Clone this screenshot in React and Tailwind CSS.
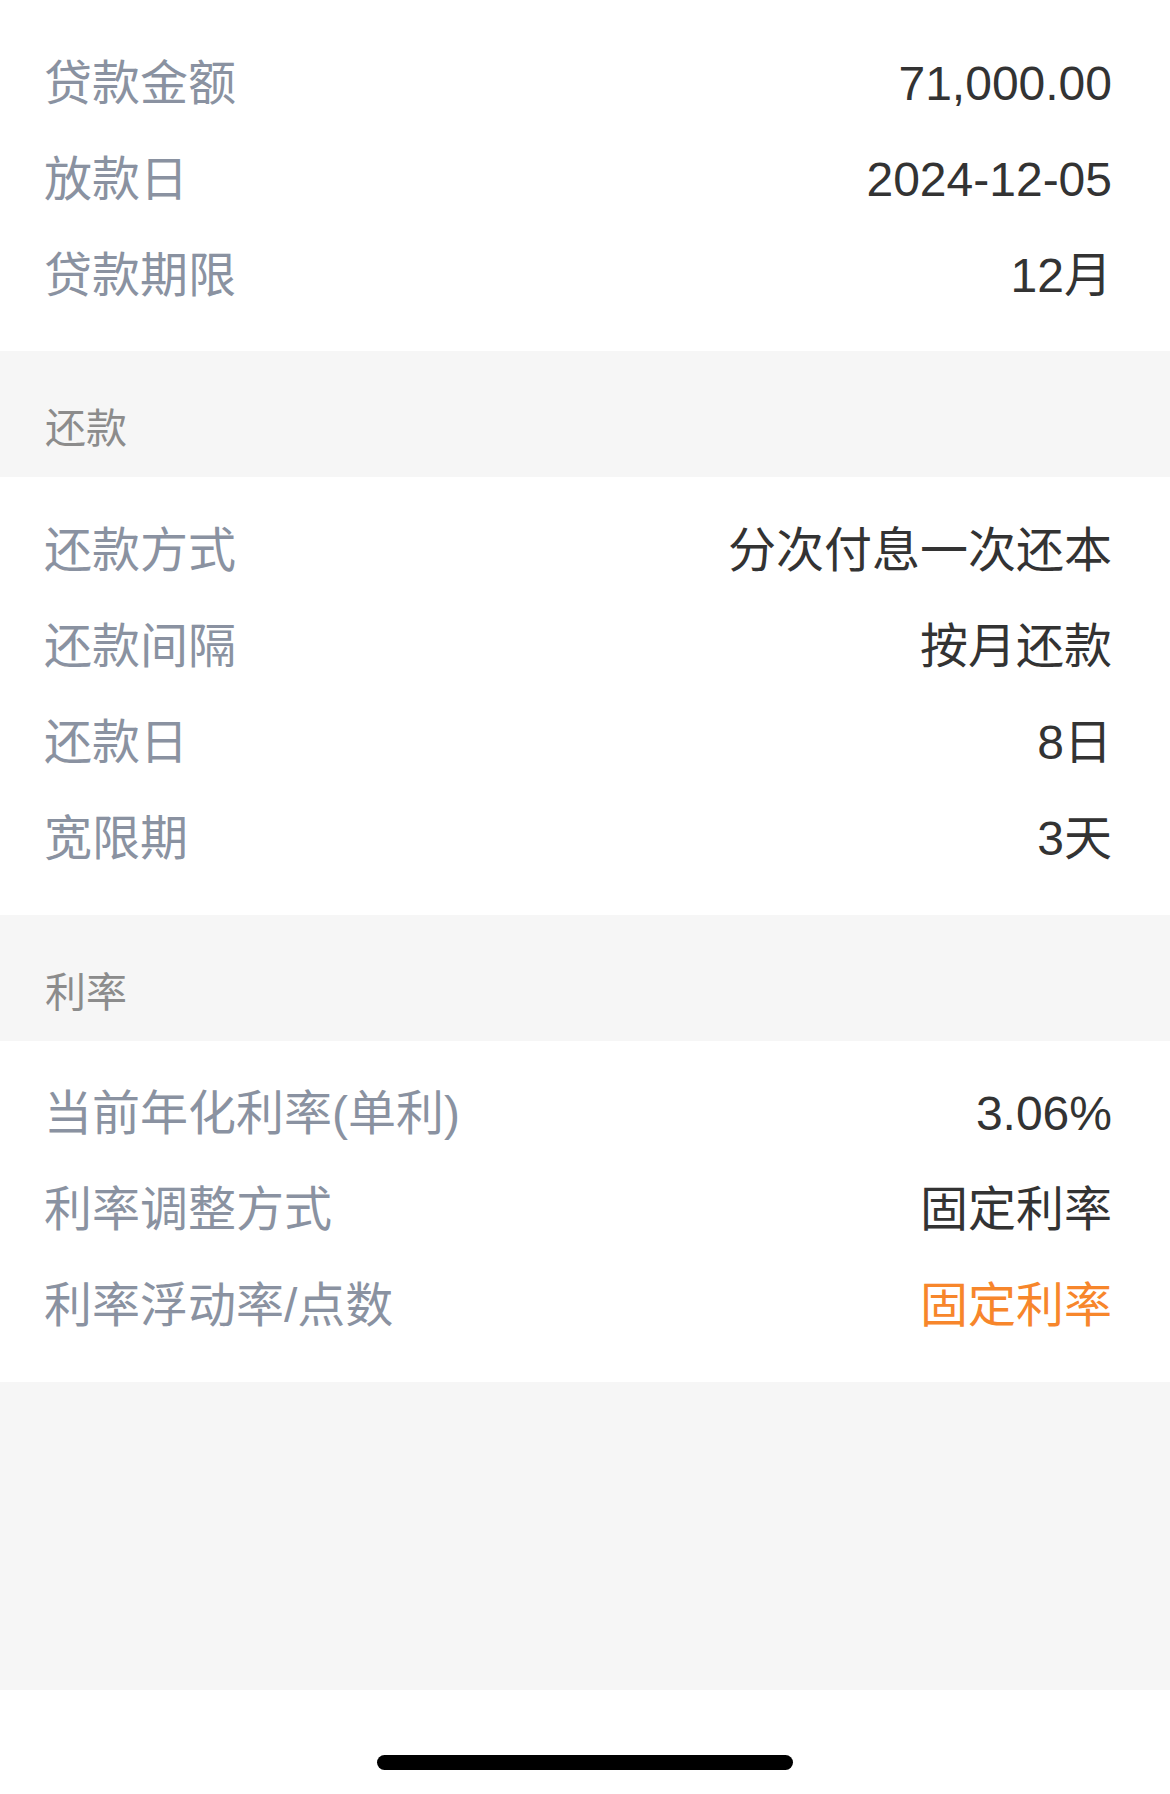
import React from 'react';

const loanRows = [
  { label: '贷款金额', value: '71,000.00' },
  { label: '放款日', value: '2024-12-05' },
  { label: '贷款期限', value: '12月' },
];

const repayRows = [
  { label: '还款方式', value: '分次付息一次还本' },
  { label: '还款间隔', value: '按月还款' },
  { label: '还款日', value: '8日' },
  { label: '宽限期', value: '3天' },
];

const rateRows = [
  { label: '当前年化利率(单利)', value: '3.06%' },
  { label: '利率调整方式', value: '固定利率' },
  { label: '利率浮动率/点数', value: '固定利率', highlight: true },
];

const Row = ({ label, value, highlight }) => (
  <div className="h-[96px] flex items-center justify-between pl-[44px] pr-[58px] text-[48px] leading-none">
    <span className="text-[#8a92a1]">{label}</span>
    <span className={highlight ? 'text-[#f7862b]' : 'text-[#333333]'}>{value}</span>
  </div>
);

const SectionTitle = ({ title }) => (
  <div className="h-[126px] bg-[#f6f6f6] flex items-end pl-[45px] pb-[27px]">
    <span className="text-[41px] leading-[42px] text-[#8c8c8c]">{title}</span>
  </div>
);

const App = () => {
  return (
    <div className="w-[1170px] h-[1794px] bg-white flex flex-col font-['Liberation_Sans','Noto_Sans_CJK_SC',sans-serif]">
      <div className="pt-[36px] pb-[27px]">
        {loanRows.map((row) => (
          <Row key={row.label} {...row} />
        ))}
      </div>

      <SectionTitle title="还款" />
      <div className="pt-[26px] pb-[28px]">
        {repayRows.map((row) => (
          <Row key={row.label} {...row} />
        ))}
      </div>

      <SectionTitle title="利率" />
      <div className="pt-[25px] pb-[28px]">
        {rateRows.map((row) => (
          <Row key={row.label} {...row} />
        ))}
      </div>

      <div className="h-[308px] bg-[#f6f6f6]" />

      <div className="h-[104px] flex justify-center pt-[65px]">
        <div className="w-[416px] h-[15px] rounded-full bg-black" />
      </div>
    </div>
  );
};

export default App;
